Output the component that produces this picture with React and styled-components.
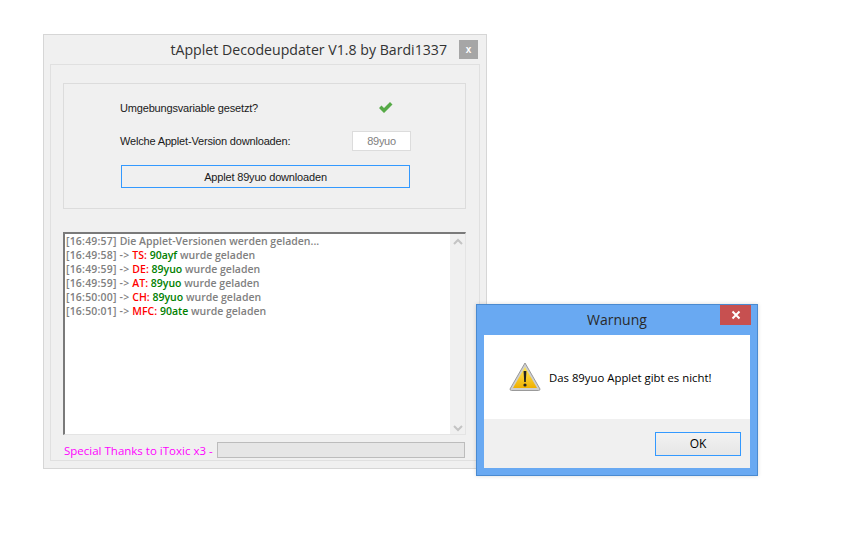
import React from 'react'
import styled, { createGlobalStyle } from 'styled-components'

const logLines = [
  { time: '[16:49:57] ', text: 'Die Applet-Versionen werden geladen...' },
  { time: '[16:49:58] -> ', code: 'TS:', version: '90ayf' },
  { time: '[16:49:59] -> ', code: 'DE:', version: '89yuo' },
  { time: '[16:49:59] -> ', code: 'AT:', version: '89yuo' },
  { time: '[16:50:00] -> ', code: 'CH:', version: '89yuo' },
  { time: '[16:50:01] -> ', code: 'MFC:', version: '90ate' },
]

const Global = createGlobalStyle`
  html, body {
    margin: 0;
    padding: 0;
    background: #fff;
    font-family: "Liberation Sans", Arial, sans-serif;
  }
`

const Desktop = styled.div`
  position: relative;
  width: 861px;
  height: 533px;
  overflow: hidden;
  background: #fff;
`

const Window = styled.div`
  position: absolute;
  left: 43px;
  top: 34px;
  width: 444px;
  height: 435px;
  box-sizing: border-box;
  padding: 0 6px 7px 6px;
  display: flex;
  flex-direction: column;
  background: #f0f0f0;
  border: 1px solid #d6d6d6;
`

const TitleBar = styled.div`
  height: 29px;
  flex: none;
  display: flex;
  align-items: center;
  justify-content: flex-end;
  gap: 12px;
  padding: 0 2px 0 0;
`

const Title = styled.div`
  font-family: "Open Sans", sans-serif;
  font-size: 14.15px;
  color: #333;
  white-space: nowrap;
`

const GrayClose = styled.div`
  width: 19px;
  height: 19px;
  background: #a6a6a6;
  color: #fff;
  font: bold 10px "Liberation Sans", sans-serif;
  display: flex;
  align-items: center;
  justify-content: center;
`

const Inner = styled.div`
  flex: 1;
  box-sizing: border-box;
  border: 1px solid #e0e0e0;
  padding: 18px 13px 0 12px;
  display: flex;
  flex-direction: column;
`

const Group = styled.div`
  height: 126px;
  flex: none;
  box-sizing: border-box;
  border: 1px solid #dcdcdc;
  padding: 0 54px 0 56px;
  display: flex;
  flex-direction: column;
`

const Row = styled.div`
  display: flex;
  align-items: center;
  justify-content: space-between;
  height: ${p => p.$h}px;
  flex: none;
`

const Label = styled.span`
  font-size: 11px;
  letter-spacing: -0.17px;
  color: #1a1a1a;
  white-space: nowrap;
`

const Check = styled.svg`
  width: 15px;
  height: 13px;
  margin-right: 18px;
`

const VersionInput = styled.div`
  width: 59px;
  height: 20px;
  box-sizing: border-box;
  border: 1px solid #dcdcdc;
  background: #fff;
  color: #808080;
  font-size: 11px;
  letter-spacing: -0.3px;
  display: flex;
  align-items: center;
  justify-content: center;
`

const DownloadButton = styled.div`
  margin: 14px 1px 0 1px;
  height: 23px;
  flex: none;
  box-sizing: border-box;
  border: 1px solid #3399ff;
  background: #f0f0f0;
  color: #1a1a1a;
  font-size: 11px;
  letter-spacing: -0.17px;
  display: flex;
  align-items: center;
  justify-content: center;
`

const Log = styled.div`
  margin-top: 23px;
  height: 203px;
  flex: none;
  box-sizing: border-box;
  display: flex;
  background: #fff;
  border-style: solid;
  border-width: 2px 1px 1px 2px;
  border-color: #7a7a7a #e4e4e4 #e4e4e4 #7a7a7a;
`

const LogText = styled.div`
  flex: 1;
  padding: 0 0 0 1px;
`

const LogLine = styled.div`
  height: 14px;
  line-height: 14px;
  font-family: "Open Sans", sans-serif;
  font-size: 10.5px;
  font-weight: 600;
  color: #808080;
  white-space: nowrap;
`

const Time = styled.span`
  letter-spacing: 0.2px;
`

const Code = styled.span`
  color: #ff0000;
`

const Version = styled.span`
  color: #008000;
`

const ScrollBar = styled.div`
  width: 15px;
  background: #f0f0f0;
  display: flex;
  flex-direction: column;
  justify-content: space-between;
  align-items: center;
  padding: 4px 0 2px;
`

const Arrow = styled.svg`
  width: 10px;
  height: 7px;
`

const Footer = styled.div`
  flex: 1;
  display: flex;
  align-items: center;
  justify-content: space-between;
  padding: 5px 1px 0 1px;
`

const Thanks = styled.span`
  font-family: "Open Sans", sans-serif;
  font-size: 11.5px;
  color: #ff00ff;
  white-space: nowrap;
`

const Progress = styled.div`
  width: 248px;
  height: 16px;
  box-sizing: border-box;
  border: 1px solid #bcbcbc;
  background: #e6e6e6;
`

const Dialog = styled.div`
  position: absolute;
  left: 476px;
  top: 304px;
  width: 282px;
  height: 172px;
  box-sizing: border-box;
  padding: 0 7px 7px 7px;
  display: flex;
  flex-direction: column;
  background: #69a9f2;
  border: 1px solid #4a8ad0;
  box-shadow: 0 0 4px rgba(0, 0, 0, 0.15);
`

const DialogTitleBar = styled.div`
  position: relative;
  height: 30px;
  flex: none;
  box-sizing: border-box;
  padding-bottom: 2px;
  display: flex;
  align-items: center;
  justify-content: center;
`

const DialogTitle = styled.div`
  font-family: "Open Sans", sans-serif;
  font-size: 14px;
  color: #2a2a2a;
`

const RedClose = styled.div`
  position: absolute;
  right: -1px;
  top: 0;
  width: 31px;
  height: 20px;
  background: #c75050;
  display: flex;
  align-items: center;
  justify-content: center;
`

const DialogBody = styled.div`
  flex: 1;
  display: flex;
  flex-direction: column;
`

const Message = styled.div`
  height: 84px;
  flex: none;
  box-sizing: border-box;
  background: #fff;
  display: flex;
  align-items: center;
  gap: 8px;
  padding: 0 0 0 25px;
`

const MessageText = styled.span`
  font-family: "Open Sans", sans-serif;
  font-size: 11.35px;
  color: #000;
  white-space: nowrap;
`

const DialogFooter = styled.div`
  flex: 1;
  background: #f0f0f0;
  display: flex;
  align-items: center;
  justify-content: flex-end;
  padding-right: 9px;
`

const OkButton = styled.div`
  width: 86px;
  height: 24px;
  box-sizing: border-box;
  border: 1px solid #3399ff;
  background: linear-gradient(#f2f2f2, #e6e6e6);
  font-family: "Open Sans", sans-serif;
  font-size: 12px;
  color: #000;
  display: flex;
  align-items: center;
  justify-content: center;
`

function WarningIcon() {
  return (
    <svg width="32" height="30" viewBox="0 0 32 30">
      <defs>
        <linearGradient id="warnFill" x1="0" y1="0" x2="0" y2="1">
          <stop offset="0" stopColor="#ffe75a" />
          <stop offset="1" stopColor="#f0b000" />
        </linearGradient>
      </defs>
      <path d="M16 1 L31 27 Q31 28.5 29.5 28.5 L2.5 28.5 Q1 28.5 1 27 Z" fill="#cfcfcf" stroke="#9a9a9a" strokeWidth="1" strokeLinejoin="round" />
      <path d="M16 5 L28 26 L4 26 Z" fill="url(#warnFill)" />
      <path d="M14.6 9 L17.4 9 L16.8 20 L15.2 20 Z" fill="#222" />
      <circle cx="16" cy="23" r="1.6" fill="#222" />
    </svg>
  )
}

export default function App() {
  return (
    <Desktop>
      <Global />
      <Window>
        <TitleBar>
          <Title>tApplet Decodeupdater V1.8 by Bardi1337</Title>
          <GrayClose>x</GrayClose>
        </TitleBar>
        <Inner>
          <Group>
            <Row $h={47}>
              <Label>Umgebungsvariable gesetzt?</Label>
              <Check viewBox="0 0 15 13">
                <path d="M1 7 L3.5 4.5 L6 7 L12 1 L14.5 3.5 L6 12 Z" fill="#56aa47" />
              </Check>
            </Row>
            <Row $h={20}>
              <Label>Welche Applet-Version downloaden:</Label>
              <VersionInput>89yuo</VersionInput>
            </Row>
            <DownloadButton>Applet 89yuo downloaden</DownloadButton>
          </Group>
          <Log>
            <LogText>
              {logLines.map((line, i) => (
                <LogLine key={i}>
                  <Time>{line.time}</Time>
                  {line.text}
                  {line.code && (
                    <>
                      <Code>{line.code}</Code> <Version>{line.version}</Version> wurde geladen
                    </>
                  )}
                </LogLine>
              ))}
            </LogText>
            <ScrollBar>
              <Arrow viewBox="0 0 10 7">
                <path d="M1 6 L5 2 L9 6" fill="none" stroke="#c4c4c4" strokeWidth="2" />
              </Arrow>
              <Arrow viewBox="0 0 10 7">
                <path d="M1 1 L5 5 L9 1" fill="none" stroke="#c4c4c4" strokeWidth="2" />
              </Arrow>
            </ScrollBar>
          </Log>
          <Footer>
            <Thanks>Special Thanks to iToxic x3 -</Thanks>
            <Progress />
          </Footer>
        </Inner>
      </Window>
      <Dialog>
        <DialogTitleBar>
          <DialogTitle>Warnung</DialogTitle>
          <RedClose>
            <svg width="10" height="10" viewBox="0 0 10 10">
              <path d="M1.5 1.5 L8.5 8.5 M8.5 1.5 L1.5 8.5" stroke="#fff" strokeWidth="2" />
            </svg>
          </RedClose>
        </DialogTitleBar>
        <DialogBody>
          <Message>
            <WarningIcon />
            <MessageText>Das 89yuo Applet gibt es nicht!</MessageText>
          </Message>
          <DialogFooter>
            <OkButton>OK</OkButton>
          </DialogFooter>
        </DialogBody>
      </Dialog>
    </Desktop>
  )
}
